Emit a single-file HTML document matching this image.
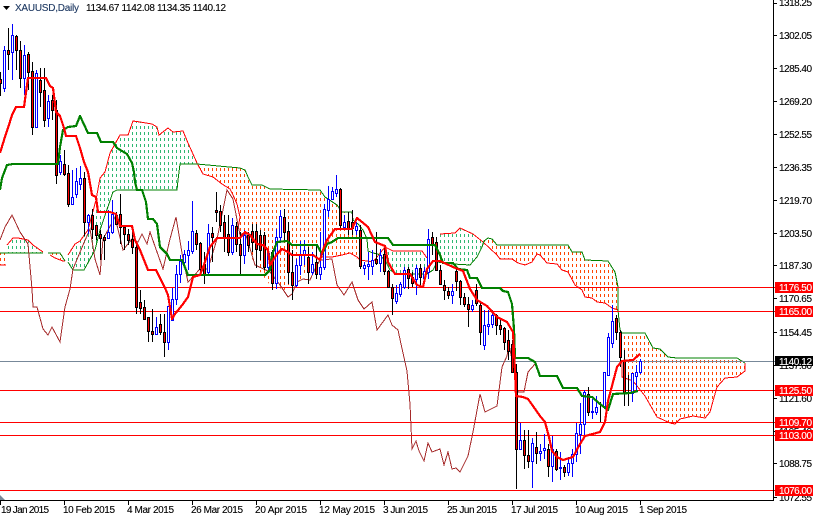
<!DOCTYPE html>
<html><head><meta charset="utf-8"><style>
html,body{margin:0;padding:0;background:#fff;width:814px;height:516px;overflow:hidden}
svg{display:block;position:absolute;left:0;top:0}
text{font-family:"Liberation Sans",sans-serif;font-size:10px;fill:#000;stroke:#000;stroke-width:.12px}
</style></head><body>
<svg width="814" height="516" viewBox="0 0 814 516" xmlns="http://www.w3.org/2000/svg">
<defs>
<pattern id="o" patternUnits="userSpaceOnUse" width="4" height="6"><rect x="0" y="0" width="1" height="3" fill="#ff4500"/></pattern>
<pattern id="g" patternUnits="userSpaceOnUse" width="4" height="6"><rect x="0" y="0" width="1" height="3" fill="#2eb872"/></pattern>
</defs>
<rect width="814" height="516" fill="#fff"/>
<g shape-rendering="crispEdges">
<path fill="url(#o)" d="M0 253H6V265H0ZM48 253H60L65 261H63L55 258L50 255ZM197 165L240 168L245 170L248 177L252 185L262 185L270 189L320 190L325 197L337 205L342 212L352 212L353 220L358 224L360 262L352 254L345 254L332 257L320 257L315 265L300 280L285 290L270 285L255 265L240 232L240 217L237 204L233 195L230 189L222 184L213 177L203 174ZM484 241L488 238L492 239L497 245L568 245L572 252L582 252L585 260L608 261L615 272L618 287L618 310L612 308L605 303L597 302L592 298L585 297L582 290L575 285L568 272L562 270L557 264L547 263L540 255L537 254L532 262L525 265L518 263L512 259L500 259L497 255ZM622 333L645 333L653 348L660 349L668 357L677 358L737 358L745 363L745 371L737 377L725 378L717 387L713 401L710 412L705 418L693 416L680 419L675 424L670 423L657 417L645 396L633 381L622 377Z"/>
<path fill="url(#g)" d="M7 245L13 238L18 238L28 240L33 245L43 252L43 253L7 253ZM68 255L75 244L80 241L88 230L92 215L96 200L100 178L105 172L110 153L120 135L128 135L133 121L140 122L152 124L157 127L159 135L168 128L173 132L183 131L188 143L197 163L180 164L178 180L177 190L117 190L113 192L100 230L95 250L84 270L73 270L68 262ZM385 247L393 251L422 251L427 258L427 272L397 274L390 270L373 253ZM440 234L455 233L460 228L473 234L483 242L477 257L470 265L453 264L437 262Z"/>
<g fill="none" stroke="#ff0000" stroke-width="1">
<path d="M0 265H6M7 245L13 238L18 238L28 240L33 245L43 252M50 255L55 258L63 261L65 261M68 255L75 244L80 241L88 230L92 215L96 200L100 178L105 172L110 153L120 135L128 135L133 121L140 122L152 124L157 127L159 135L168 128L173 132L183 131L188 143L197 163L203 174L213 177L222 184L230 189L233 195L237 204L240 217L238 229M320 257L332 257L342 255L350 253L357 257L360 260L373 262L385 247L393 251L422 251L427 258M440 234L455 233L460 228L473 234L483 242L497 255L500 259L512 259L518 263L525 265L532 262L537 254L540 255L547 263L557 264L562 270L568 272L575 285L582 290L585 297L592 298L597 302L605 303L612 308L618 310M622 361L622 377L633 381L645 396L657 417L670 423L675 424L680 419L693 416L705 418L710 412L713 401L717 387L725 378L737 377L745 371L745 363"/>
</g>
<g fill="none" stroke="#008000" stroke-width="1">
<path d="M0 253H43M48 253H60L65 261M68 262L73 270L84 270L95 250L100 230L113 192L117 190L177 190L178 180L180 164H197L240 168L245 170L248 177L252 185L262 185L270 189L320 190L325 197L337 205L342 212L352 212L353 220L358 224L363 230L367 239L368 251L373 253L378 254L385 260L390 270L397 274L427 274L433 270L437 262L453 264L470 265L477 257L482 247L484 241L488 238L492 239L497 245L568 245L572 252L582 252L585 260L608 261L615 272L618 287L618 310L620 330L622 333L645 333L653 348L660 349L668 357L677 358L737 358L745 363"/>
</g>
<!-- horizontal levels -->
<rect x="0" y="361" width="775" height="1" fill="#778899"/>
<g fill="#ff0000">
<rect x="0" y="287" width="775" height="1"/>
<rect x="0" y="311" width="775" height="1"/>
<rect x="0" y="390" width="775" height="1"/>
<rect x="0" y="422" width="775" height="1"/>
<rect x="0" y="435" width="775" height="1"/>
<rect x="0" y="490" width="775" height="1"/>
</g>
<!-- chikou -->
<path fill="none" stroke="#a52a2a" stroke-width="1" d="M0 240L5 227L12 215L20 232L28 244L32 289L33 307L37 307L43 329L48 335L52 327L60 342L65 307L70 289L73 269L83 245L90 229L95 259L100 275L103 239L108 230L115 217L123 250L132 239L138 242L142 234L147 244L150 232L157 252L163 269L170 239L176 217L183 259L188 282L200 269L208 269L217 239L227 190L233 199L240 235L245 232L255 265L270 272L280 285L288 297L292 294L297 282L303 279L310 280L315 269L320 260L332 259L337 285L344 295L352 282L358 300L364 309L372 302L377 330L388 315L392 325L398 330L401 344L407 371L410 404L412 449L416 441L419 451L424 461L428 443L432 452L440 449L444 465L448 452L452 469L456 468L460 472L468 456L473 432L480 394L485 412L497 406L502 367L507 356L509 344L518 392L524 392L528 372L535 364"/>
<!-- black wicks -->
<g transform="translate(.5 0)">
<path fill="none" stroke="#000" stroke-width="1" d="M0 72V96M8 28V70M16 35V70M20 41V88M28 52V90M32 62V135M40 68V107M44 68V127M52 95V120M56 100V184M64 150V176M68 165V207M84 172V236M92 209V239M96 225V240M100 230V260M104 235V260M116 212V225M120 194V244M124 227V250M128 229V245M132 227V254M136 244V314M140 290V314M144 300V320M148 317V342M152 309V342M160 314V335M164 314V357M196 230V250M200 242V274M204 252V284M212 227V262M216 192V222M220 205V232M224 215V252M228 215V256M236 222V252M240 232V274M248 232V252M252 224V252M256 224V268M260 230V260M264 232V270M272 250V290M284 209V240M288 222V284M292 250V300M308 247V284M316 245V279M340 188V229M348 212V235M352 210V235M360 225V269M376 232V265M384 247V275M388 270V287M392 284V315M408 267V289M412 272V287M420 264V287M432 232V255M436 237V271M440 265V285M444 280V300M448 287V299M456 267V291M460 280V305M464 293V307M468 297V327M476 284V306M480 302V345M496 314V335M500 320V335M504 327V350M508 330V360M512 340V372M516 364V489M524 430V469M528 430V468M536 432V464M548 444V477M556 449V471M564 465V477M588 387V416M600 402V422M616 315V340M620 330V367M624 350V406M628 375V406"/>
<path fill="none" stroke="#0000ff" stroke-width="1" d="M4 46V92M12 24V80M24 45V95M36 70V127M48 95V127M60 155V175M72 170V205M76 168V198M80 166V190M88 214V234M108 210V238M112 200V234M156 317V335M168 306V350M172 288V320M176 265V305M180 255V283M184 250V267M188 241V270M192 201V254M208 224V274M232 218V255M244 230V264M268 249V272M276 229V289M280 210V243M296 259V287M300 241V275M304 240V265M312 252V275M320 232V280M324 204V270M328 186V217M332 187V200M336 175V197M344 215V229M356 222V235M364 262V275M368 252V280M372 250V275M380 249V272M396 285V304M400 282V297M404 267V289M416 265V295M424 267V282M428 229V279M452 284V304M472 300V312M484 310V350M488 310V335M492 310V328M520 423V449M532 438V488M540 444V461M544 434V459M552 436V482M560 452V480M568 457V476M572 449V477M576 423V462M580 403V454M584 390V437M592 399V419M596 396V415M604 372V409M608 333V376M612 305V348M632 373V402M636 365V392M640 359V374"/>
</g>
<!-- bodies -->
<g transform="translate(-.5 .5)">
<path fill="#fff" stroke="#0000ff" stroke-width="1" d="M4 50h2V88h-2zM12 35h2V52h-2zM24 55h2V78h-2zM36 73h2V127h-2zM48 101h2V118h-2zM60 161h2V172h-2zM72 197h2V204h-2zM76 181h2V194h-2zM80 178h2V184h-2zM88 215h2V222h-2zM108 232h2V238h-2zM112 214h2V232h-2zM156 327h2V334h-2zM168 306h2V342h-2zM172 299h2V320h-2zM176 274h2V299h-2zM180 261h2V274h-2zM184 254h2V262h-2zM188 250h2V255h-2zM192 231h2V251h-2zM208 233h2V272h-2zM232 225h2V252h-2zM244 235h2V255h-2zM268 253h2V267h-2zM276 237h2V283h-2zM280 216h2V237h-2zM296 265h2V285h-2zM300 254h2V265h-2zM304 250h2V255h-2zM312 264h2V272h-2zM320 267h2V274h-2zM324 209h2V267h-2zM328 199h2V210h-2zM332 191h2V199h-2zM336 189h2V193h-2zM344 222h2V227h-2zM356 226h2V230h-2zM364 265h2V268h-2zM368 264h2V266h-2zM372 260h2V266h-2zM380 255h2V263h-2zM396 293h2V301h-2zM400 284h2V294h-2zM404 270h2V287h-2zM416 268h2V279h-2zM424 271h2V278h-2zM428 239h2V272h-2zM452 291h2V295h-2zM472 305h2V309h-2zM484 325h2V345h-2zM488 324h2V326h-2zM492 315h2V324h-2zM520 440h2V449h-2zM532 443h2V461h-2zM540 451h2V453h-2zM544 448h2V450h-2zM552 449h2V466h-2zM560 467h2V468h-2zM568 463h2V472h-2zM572 454h2V463h-2zM576 433h2V454h-2zM580 424h2V434h-2zM584 392h2V424h-2zM592 411h2V412h-2zM596 407h2V412h-2zM604 372h2V407h-2zM608 337h2V375h-2zM612 321h2V343h-2zM632 373h2V393h-2zM636 372h2V376h-2zM640 361h2V372h-2z"/>
<path fill="#ff0000" stroke="#000" stroke-width="1" d="M0 79h2V83h-2zM8 50h2V54h-2zM16 36h2V50h-2zM20 50h2V78h-2zM28 54h2V72h-2zM32 71h2V127h-2zM40 80h2V92h-2zM44 90h2V120h-2zM52 100h2V110h-2zM56 110h2V175h-2zM64 164h2V174h-2zM68 173h2V204h-2zM84 178h2V222h-2zM92 215h2V229h-2zM96 225h2V235h-2zM100 234h2V238h-2zM104 237h2V240h-2zM116 215h2V224h-2zM120 214h2V227h-2zM124 227h2V234h-2zM128 234h2V240h-2zM132 239h2V247h-2zM136 247h2V307h-2zM140 302h2V308h-2zM144 307h2V319h-2zM148 317h2V331h-2zM152 331h2V334h-2zM160 324h2V332h-2zM164 332h2V342h-2zM196 233h2V244h-2zM200 243h2V269h-2zM204 264h2V274h-2zM212 233h2V237h-2zM216 210h2V212h-2zM220 211h2V225h-2zM224 222h2V237h-2zM228 234h2V252h-2zM236 226h2V244h-2zM240 244h2V255h-2zM248 235h2V245h-2zM252 231h2V242h-2zM256 231h2V249h-2zM260 235h2V250h-2zM264 235h2V267h-2zM272 252h2V283h-2zM284 217h2V232h-2zM288 231h2V272h-2zM292 272h2V285h-2zM308 257h2V272h-2zM316 262h2V274h-2zM340 189h2V225h-2zM348 221h2V229h-2zM352 222h2V228h-2zM360 230h2V266h-2zM376 259h2V263h-2zM384 254h2V271h-2zM388 271h2V287h-2zM392 287h2V298h-2zM408 269h2V278h-2zM412 277h2V283h-2zM420 268h2V277h-2zM432 237h2V245h-2zM436 242h2V270h-2zM440 270h2V284h-2zM444 285h2V290h-2zM448 291h2V295h-2zM456 271h2V281h-2zM460 281h2V297h-2zM464 297h2V304h-2zM468 304h2V309h-2zM476 290h2V303h-2zM480 305h2V332h-2zM496 315h2V325h-2zM500 325h2V329h-2zM504 328h2V342h-2zM508 340h2V351h-2zM512 344h2V372h-2zM516 372h2V449h-2zM524 440h2V455h-2zM528 455h2V461h-2zM536 447h2V453h-2zM548 449h2V466h-2zM556 451h2V469h-2zM564 467h2V472h-2zM588 394h2V412h-2zM616 318h2V332h-2zM620 332h2V357h-2zM624 361h2V393h-2z"/>
</g>
</g>
<!-- thick indicator lines -->
<g fill="none" stroke-linejoin="round" stroke-width="2.2" shape-rendering="crispEdges">
<path stroke="#008000" d="M0 190L2 178L7 165L13 164H58L60 147L63 130L68 127L76 126L80 116L88 133H97L101 142H113L117 148L127 154L132 163L134 172L135 182L137 190H142L146 202L148 219H153L157 224L160 247L167 254L170 260H182L188 275H265L270 270L272 255L277 242L287 241L292 245H317L322 254L327 244L332 242L338 238H388L393 245H435L440 255L443 263H453L458 269L467 270L470 278H477L482 288H500L503 291L508 292L512 304L514 329L515 358H528L535 362L540 376H557L563 388H577L582 396L592 397L600 404L608 410L613 394L630 393L638 391"/>
<path stroke="#ff0000" d="M0 153L4 140L8 128L12 115L16 107H24L27 85L28 78H46L50 86L53 88L56 112L60 116L64 128L66 136H76L80 148L84 162L88 172L92 195L96 197L98 212H110L116 214L120 226H132L135 240L140 250L148 270H156L165 288L168 295L172 319L175 314L183 304L188 297L191 285L193 277L200 275L205 262L210 247L217 238H240L245 232L250 235L257 244L263 245L268 250L270 265L277 254L282 249L288 252L292 255H313L320 260L323 250L327 240L335 229H352L357 218L362 222L368 227L375 242L385 246L388 262L395 274H410L417 285L423 287L427 269L433 261H440L453 267L463 271L470 289L477 300L487 306L497 317L507 322L513 332L515 371L516 396L523 397L528 399L533 406L540 416L545 422L549 437L552 451L557 457L563 460L573 457L580 444L585 436L600 432L605 422L608 401L617 367L622 361L633 360L640 354"/>
</g>
<!-- axis -->
<g shape-rendering="crispEdges" fill="#000">
<rect x="773" y="0" width="1" height="501"/>
<rect x="0" y="500" width="774" height="1"/>
<path d="M774 3h3v1h-3zM774 35h3v1h-3zM774 68h3v1h-3zM774 101h3v1h-3zM774 134h3v1h-3zM774 167h3v1h-3zM774 200h3v1h-3zM774 233h3v1h-3zM774 265h3v1h-3zM774 298h3v1h-3zM774 332h3v1h-3zM774 365h3v1h-3zM774 398h3v1h-3zM774 431h3v1h-3zM774 463h3v1h-3zM774 497h3v1h-3z"/>
<path d="M0 501h1v4h-1zM64 501h1v4h-1zM128 501h1v4h-1zM192 501h1v4h-1zM256 501h1v4h-1zM320 501h1v4h-1zM384 501h1v4h-1zM448 501h1v4h-1zM512 501h1v4h-1zM576 501h1v4h-1zM640 501h1v4h-1z"/>
</g>
<g>
<text x="779" y="6" textLength="33">1318.25</text>
<text x="779" y="39" textLength="33">1302.05</text>
<text x="779" y="72" textLength="33">1285.40</text>
<text x="779" y="105" textLength="33">1269.20</text>
<text x="779" y="138" textLength="33">1252.55</text>
<text x="779" y="171" textLength="33">1236.35</text>
<text x="779" y="204" textLength="33">1219.70</text>
<text x="779" y="237" textLength="33">1203.50</text>
<text x="779" y="269" textLength="33">1187.30</text>
<text x="779" y="302" textLength="33">1170.65</text>
<text x="779" y="336" textLength="33">1154.45</text>
<text x="779" y="369" textLength="33">1137.80</text>
<text x="779" y="402" textLength="33">1121.60</text>
<text x="779" y="435" textLength="33">1105.40</text>
<text x="779" y="467" textLength="33">1088.75</text>
<text x="779" y="501" textLength="33">1072.55</text>
</g>
<g shape-rendering="crispEdges">
<rect x="775" y="282" width="38" height="11" fill="#ff0000"/>
<rect x="775" y="306" width="38" height="11" fill="#ff0000"/>
<rect x="775" y="356" width="38" height="10" fill="#000"/>
<rect x="775" y="385" width="38" height="11" fill="#ff0000"/>
<rect x="775" y="417" width="38" height="11" fill="#ff0000"/>
<rect x="775" y="430" width="38" height="11" fill="#ff0000"/>
<rect x="775" y="485" width="38" height="11" fill="#ff0000"/>
</g>
<g>
<text x="779" y="291" textLength="33" style="fill:#fff;stroke:#fff">1176.50</text>
<text x="779" y="315" textLength="33" style="fill:#fff;stroke:#fff">1165.00</text>
<text x="779" y="365" textLength="33" style="fill:#fff;stroke:#fff">1140.12</text>
<text x="779" y="394" textLength="33" style="fill:#fff;stroke:#fff">1125.50</text>
<text x="779" y="426" textLength="33" style="fill:#fff;stroke:#fff">1109.70</text>
<text x="779" y="439" textLength="33" style="fill:#fff;stroke:#fff">1103.00</text>
<text x="779" y="494" textLength="33" style="fill:#fff;stroke:#fff">1076.00</text>
</g>
<g>
<text x="1" y="513" textLength="48">19 Jan 2015</text>
<text x="63" y="513" textLength="52">10 Feb 2015</text>
<text x="127" y="513" textLength="47">4 Mar 2015</text>
<text x="191" y="513" textLength="52">26 Mar 2015</text>
<text x="255" y="513" textLength="52">20 Apr 2015</text>
<text x="319" y="513" textLength="56">12 May 2015</text>
<text x="383" y="513" textLength="45">3 Jun 2015</text>
<text x="447" y="513" textLength="50">25 Jun 2015</text>
<text x="511" y="513" textLength="47">17 Jul 2015</text>
<text x="575" y="513" textLength="53">10 Aug 2015</text>
<text x="639" y="513" textLength="48">1 Sep 2015</text>
</g>
<path d="M0 495L5 500H0Z" fill="#778899"/>
<path d="M3 6H10L6.5 10Z" fill="#000"/>
<text x="15" y="11" textLength="64" style="fill:#1f3a63;stroke:#1f3a63">XAUUSD,Daily</text>
<text x="86" y="11" textLength="140">1134.67 1142.08 1134.35 1140.12</text>
</svg>
</body></html>
